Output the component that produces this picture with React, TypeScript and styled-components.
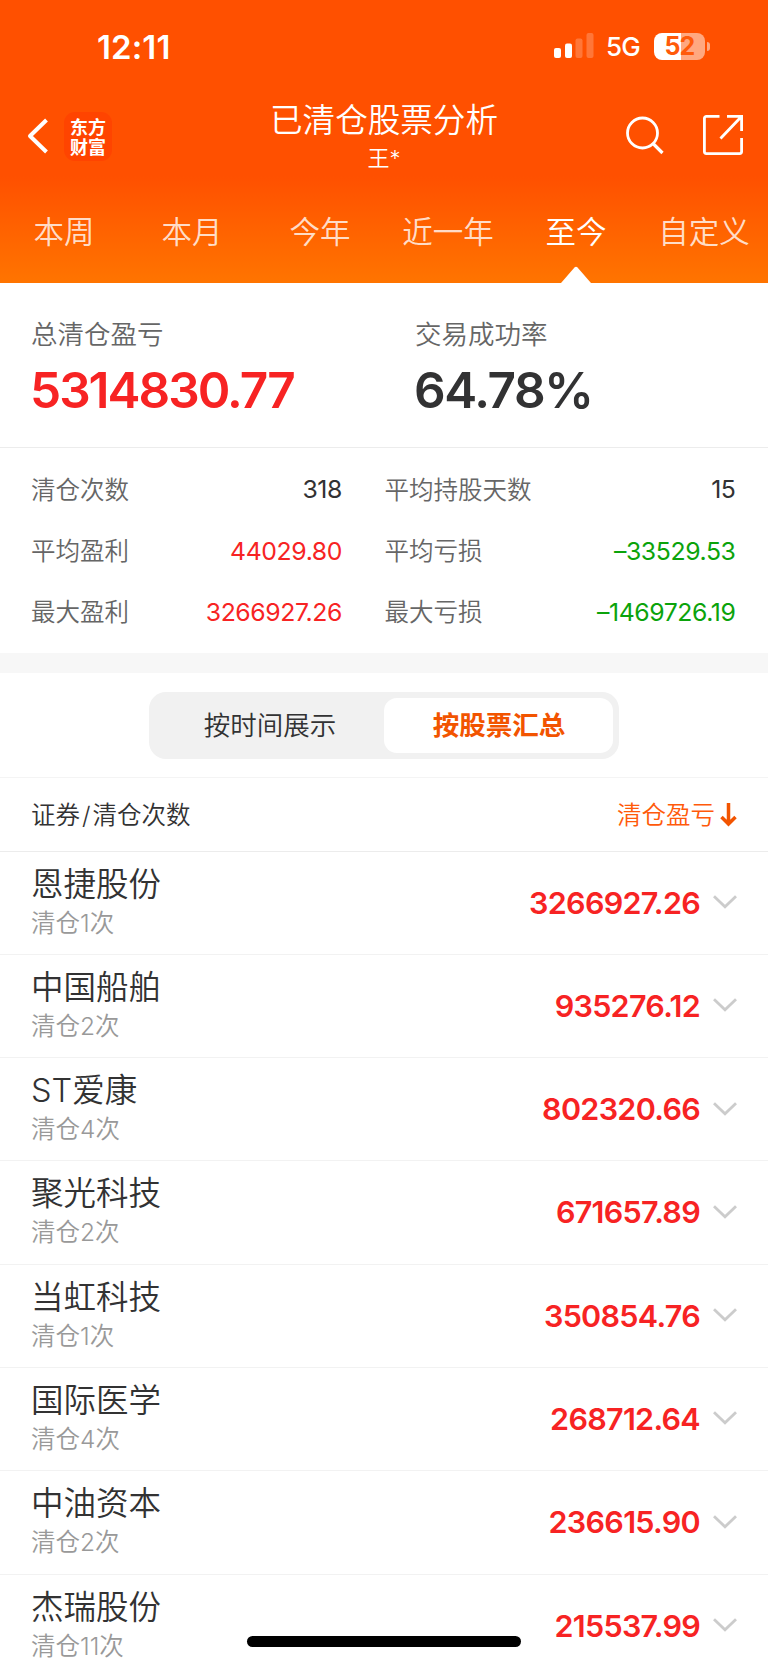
import React from "react";
import styled, { createGlobalStyle } from "styled-components";

const Global = createGlobalStyle`
  * { box-sizing: border-box; }
  html, body { margin: 0; padding: 0; background: #fff; }
  body { overflow: hidden; }
`;

const RED = "#f72323";
const GREEN = "#0ba30b";
const INK = "#323233";

const Screen = styled.main`
  position: relative;
  width: 768px;
  height: 1663px;
  overflow: hidden;
  background: #fff;
  color: ${INK};
  font-family: Inter, "Noto Sans CJK SC", sans-serif;
  font-weight: 350;
  white-space: nowrap;
`;

const Header = styled.header`
  display: flex;
  flex-direction: column;
  height: 282.5px;
  color: #fff;
  background: linear-gradient(#ff5000 0, #ff5000 176px, #ff7400 282px);
`;

const StatusBar = styled.div`
  display: flex;
  justify-content: space-between;
  align-items: center;
  height: 92px;
  padding: 0 58px 0 97px;
`;

const Clock = styled.span`
  padding-top: 1px;
  font-size: 33px;
  line-height: 40px;
  font-weight: 600;
  letter-spacing: 0.1px;
`;

const StatusRight = styled.div`
  display: flex;
  align-items: center;
`;

const Network = styled.span`
  width: 36px;
  margin: 2px 12px 0 12px;
  font-size: 26px;
  line-height: 30px;
  font-weight: 500;
  letter-spacing: -0.8px;
`;

const Battery = styled.div`
  display: flex;
  align-items: center;
  gap: 2px;
`;

const BatteryBody = styled.div`
  width: 51px;
  height: 27px;
  border-radius: 8px;
  text-align: center;
  font-size: 25px;
  line-height: 27px;
  font-weight: 700;
  letter-spacing: -0.8px;
  color: #ff5a0a;
  background: linear-gradient(90deg, #fff 52%, #ffa880 52%);
`;

const BatteryTip = styled.div`
  width: 3px;
  height: 9px;
  border-radius: 0 3px 3px 0;
  background: #ffa880;
`;

const NavBar = styled.div`
  display: grid;
  grid-template-columns: 1fr auto 1fr;
  height: 86px;
`;

const NavSide = styled.div<{ $end?: boolean }>`
  display: flex;
  align-items: center;
  justify-content: ${(p) => (p.$end ? "flex-end" : "flex-start")};
  gap: ${(p) => (p.$end ? 38 : 16)}px;
  padding: ${(p) => (p.$end ? "0 24px 0 0" : "2px 0 0 27px")};
`;

const Logo = styled.div`
  display: flex;
  flex-direction: column;
  align-items: center;
  width: 48px;
  height: 49px;
  padding-top: 4px;
  border-radius: 11px;
  background: #ff4400;
  font-family: "Noto Sans CJK SC", sans-serif;
  font-size: 18px;
  line-height: 20px;
  font-weight: 700;
`;

const TitleBlock = styled.div`
  padding-top: 6px;
  text-align: center;
`;

const Title = styled.h1`
  margin: 0;
  font-size: 32.6px;
  line-height: 44px;
  font-weight: 350;
`;

const Account = styled.div`
  font-size: 22px;
  line-height: 32px;
`;

const Tabs = styled.nav`
  display: grid;
  grid-template-columns: repeat(6, 128px);
  flex: 1;
`;

const Tab = styled.div<{ $active?: boolean }>`
  position: relative;
  padding-top: 32px;
  text-align: center;
  font-size: 30.5px;
  line-height: 44px;
  color: ${(p) => (p.$active ? "#fff" : "rgba(255,255,255,.8)")};
`;

const Pointer = styled.svg`
  position: absolute;
  left: 49px;
  bottom: 0;
`;

const Totals = styled.section`
  display: grid;
  grid-template-columns: 1fr 1fr;
  height: 165px;
  padding-top: 31.5px;
  border-bottom: 1.5px solid #ececec;
`;

const Total = styled.div`
  padding-left: 31px;
`;

const TotalLabel = styled.div`
  font-size: 26.5px;
  line-height: 40px;
  color: #666;
`;

const TotalValue = styled.div<{ $color: string; $spacing: number }>`
  margin: 6px 0 0 -1px;
  font-size: 49.5px;
  line-height: 60px;
  font-weight: 600;
  letter-spacing: ${(p) => p.$spacing}px;
  color: ${(p) => p.$color};
`;

const Stats = styled.section`
  display: grid;
  grid-template-columns: 311px 351px;
  grid-auto-rows: 61.4px;
  column-gap: 42.5px;
  height: 205.5px;
  padding: 11px 31px 0 31px;
`;

const Stat = styled.div`
  display: flex;
  justify-content: space-between;
  align-items: center;
  font-size: 24.5px;
`;

const StatLabel = styled.span`
  padding-bottom: 2px;
  color: #666;
`;

const StatValue = styled.span<{ $color: string }>`
  color: ${(p) => p.$color};
  font-size: 24.8px;
  font-weight: 400;
  letter-spacing: -0.4px;
`;

const Band = styled.div`
  height: 20px;
  background: #f7f7f7;
`;

const SwitchArea = styled.div`
  display: flex;
  justify-content: center;
  align-items: center;
  height: 105px;
  border-bottom: 1.5px solid #f4f4f4;
`;

const Segmented = styled.div`
  display: grid;
  grid-template-columns: 1fr 229px;
  width: 470px;
  height: 67px;
  padding: 6px;
  border-radius: 17px;
  background: #f1f1f1;
`;

const Segment = styled.div<{ $active?: boolean }>`
  padding-left: ${(p) => (p.$active ? 1 : 1)}px;
  border-radius: 13px;
  text-align: center;
  font-size: 26.5px;
  line-height: 55px;
  font-weight: ${(p) => (p.$active ? 700 : 350)};
  color: ${(p) => (p.$active ? "#f25400" : INK)};
  background: ${(p) => (p.$active ? "#fff" : "transparent")};
`;

const TableHead = styled.div`
  display: flex;
  justify-content: space-between;
  align-items: center;
  height: 73.5px;
  padding: 0 31px 2px 31px;
  border-bottom: 1.5px solid #ececec;
  font-size: 24.5px;
`;

const Slash = styled.span`
  margin: 0 2px;
`;

const Sort = styled.span`
  display: flex;
  align-items: center;
  gap: 5px;
  color: #ff5a0a;

  svg {
    margin-top: 3px;
  }
`;

const Row = styled.div`
  display: flex;
  justify-content: space-between;
  height: 103.3px;
  padding: 11px 31px 0 31px;
  border-bottom: 1.5px solid #f2f2f2;
`;

const Name = styled.div`
  font-size: 32.5px;
  line-height: 44px;
`;

const Count = styled.div`
  font-size: 24.5px;
  line-height: 32px;
  color: #999;
`;

const Profit = styled.div`
  display: flex;
  align-items: center;
  gap: 13px;
  height: 79px;
  font-size: 30.5px;
  font-weight: 600;
  letter-spacing: -0.7px;
  color: ${RED};
`;

const HomeBar = styled.div`
  position: absolute;
  left: 247px;
  top: 1636px;
  width: 274px;
  height: 10.5px;
  border-radius: 6px;
  background: #000;
`;

const tabs = ["本周", "本月", "今年", "近一年", "至今", "自定义"];

const stats = [
  ["清仓次数", "318", INK],
  ["平均持股天数", "15", INK],
  ["平均盈利", "44029.80", RED],
  ["平均亏损", "–33529.53", GREEN],
  ["最大盈利", "3266927.26", RED],
  ["最大亏损", "–1469726.19", GREEN],
];

const rows = [
  ["恩捷股份", 1, "3266927.26"],
  ["中国船舶", 2, "935276.12"],
  ["ST爱康", 4, "802320.66"],
  ["聚光科技", 2, "671657.89"],
  ["当虹科技", 1, "350854.76"],
  ["国际医学", 4, "268712.64"],
  ["中油资本", 2, "236615.90"],
  ["杰瑞股份", 11, "215537.99"],
];

const Signal = () => (
  <svg width="40" height="26" viewBox="0 0 40 26" fill="#fff">
    <rect x="0" y="15" width="7" height="10" rx="2" />
    <rect x="11" y="10.5" width="7" height="14.5" rx="2" />
    <rect x="21.500" y="5.500" width="7" height="19.500" rx="2" opacity=".22" />
    <rect x="32.500" y="0" width="7" height="25" rx="2" opacity=".22" />
  </svg>
);

export default function App() {
  return (
    <>
      <Global />
      <Screen>
        <Header>
          <StatusBar>
            <Clock>12:11</Clock>
            <StatusRight>
              <Signal />
              <Network>5G</Network>
              <Battery>
                <BatteryBody>52</BatteryBody>
                <BatteryTip />
              </Battery>
            </StatusRight>
          </StatusBar>
          <NavBar>
            <NavSide>
              <svg width="21" height="36" viewBox="0 0 21 36" fill="none" stroke="#fff" strokeWidth="4">
                <path d="M19.500 2L3 18l16.500 16" strokeLinejoin="round" />
              </svg>
              <Logo>
                <span>东方</span>
                <span>财富</span>
              </Logo>
            </NavSide>
            <TitleBlock>
              <Title>已清仓股票分析</Title>
              <Account>王*</Account>
            </TitleBlock>
            <NavSide $end>
              <svg width="38" height="39" viewBox="0 0 38 39" fill="none" stroke="#fff" strokeWidth="2.8">
                <circle cx="16.500" cy="17" r="15" />
                <path d="M27 27.500L36.500 37" strokeWidth="3.200" />
              </svg>
              <svg width="42" height="42" viewBox="0 0 42 42" fill="none" stroke="#fff" strokeWidth="2.8">
                <path d="M17.500 2.400H4.400a2 2 0 0 0-2 2V37.600a2 2 0 0 0 2 2H37.600a2 2 0 0 0 2-2V24" />
                <path d="M25 2.400H39.600V17M39 3L18.500 24.500" />
              </svg>
            </NavSide>
          </NavBar>
          <Tabs>
            {tabs.map((t) => (
              <Tab key={t} $active={t === "至今"}>
                {t}
                {t === "至今" && (
                  <Pointer width="30" height="17" viewBox="0 0 30 17">
                    <path d="M0 17L13.500 1.500Q15 0 16.500 1.500L30 17Z" fill="#fff" />
                  </Pointer>
                )}
              </Tab>
            ))}
          </Tabs>
        </Header>
        <Totals>
          <Total>
            <TotalLabel>总清仓盈亏</TotalLabel>
            <TotalValue $color={RED} $spacing={-2}>5314830.77</TotalValue>
          </Total>
          <Total>
            <TotalLabel>交易成功率</TotalLabel>
            <TotalValue $color={INK} $spacing={-1.4}>64.78%</TotalValue>
          </Total>
        </Totals>
        <Stats>
          {stats.map(([label, value, color]) => (
            <Stat key={label}>
              <StatLabel>{label}</StatLabel>
              <StatValue $color={color}>{value}</StatValue>
            </Stat>
          ))}
        </Stats>
        <Band />
        <SwitchArea>
          <Segmented>
            <Segment>按时间展示</Segment>
            <Segment $active>按股票汇总</Segment>
          </Segmented>
        </SwitchArea>
        <TableHead>
          <span>
            证券<Slash>/</Slash>清仓次数
          </span>
          <Sort>
            清仓盈亏
            <svg width="17" height="24" viewBox="0 0 17 24" fill="none" stroke="#f25400" strokeWidth="3.500">
              <path d="M8.500 0V21M1.500 14L8.500 21L15.500 14" />
            </svg>
          </Sort>
        </TableHead>
        {rows.map(([name, count, profit]) => (
          <Row key={name}>
            <div>
              <Name>{name}</Name>
              <Count>清仓{count}次</Count>
            </div>
            <Profit>
              {profit}
              <svg width="24" height="14" viewBox="0 0 24 14" fill="none" stroke="#ccc" strokeWidth="2.8">
                <path d="M1 1.200L12 11.800L23 1.200" />
              </svg>
            </Profit>
          </Row>
        ))}
        <HomeBar />
      </Screen>
    </>
  );
}
